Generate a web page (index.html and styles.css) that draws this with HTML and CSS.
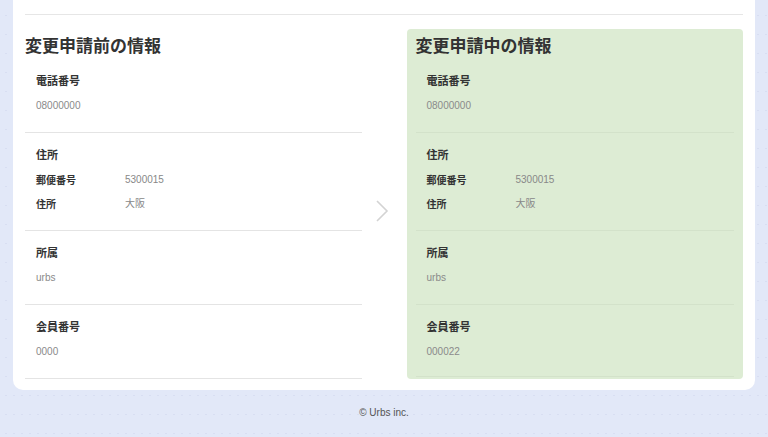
FILE: index.html
```html
<!DOCTYPE html>
<html lang="ja">
<head>
<meta charset="utf-8">
<title>変更申請</title>
<link rel="stylesheet" href="styles.css">
</head>
<body>
<main class="card">
  <div class="compare">
    <section class="panel">
      <h2 class="panel-title">変更申請前の情報</h2>
      <div class="item">
        <div class="label">電話番号</div>
        <div class="value">08000000</div>
      </div>
      <div class="item">
        <div class="label">住所</div>
        <div class="row"><span class="row-key">郵便番号</span><span class="row-val">5300015</span></div>
        <div class="row"><span class="row-key">住所</span><span class="row-val">大阪</span></div>
      </div>
      <div class="item">
        <div class="label">所属</div>
        <div class="value">urbs</div>
      </div>
      <div class="item">
        <div class="label">会員番号</div>
        <div class="value">0000</div>
      </div>
    </section>
    <div class="arrow">
      <svg width="14" height="24" viewBox="0 0 14 24"><polyline points="2,2 12,12 2,22" fill="none" stroke="#d3d3d3" stroke-width="1.6"/></svg>
    </div>
    <section class="panel panel-new">
      <h2 class="panel-title">変更申請中の情報</h2>
      <div class="item">
        <div class="label">電話番号</div>
        <div class="value">08000000</div>
      </div>
      <div class="item">
        <div class="label">住所</div>
        <div class="row"><span class="row-key">郵便番号</span><span class="row-val">5300015</span></div>
        <div class="row"><span class="row-key">住所</span><span class="row-val">大阪</span></div>
      </div>
      <div class="item">
        <div class="label">所属</div>
        <div class="value">urbs</div>
      </div>
      <div class="item">
        <div class="label">会員番号</div>
        <div class="value">000022</div>
      </div>
    </section>
  </div>
</main>
<footer class="footer">© Urbs inc.</footer>
</body>
</html>
```

FILE: styles.css
```css
html, body {
  margin: 0;
  padding: 0;
}
body {
  width: 768px;
  height: 437px;
  overflow: hidden;
  background-color: #e2e8f8;
  background-image: radial-gradient(circle, #d8def2 0.6px, transparent 1px);
  background-size: 8px 19px;
  background-position: 2px 6px;
  font-family: "Liberation Sans", "Noto Sans CJK JP", sans-serif;
  color: #333;
}
.card {
  margin: 0 13px;
  padding: 14px 12px 11px;
  background: #fff;
  border-radius: 0 0 10px 10px;
}
.compare {
  border-top: 1px solid #e6e6e6;
  padding-top: 14px;
  display: grid;
  grid-template-columns: 1fr 45px 1fr;
}
.panel {
  padding: 4px 0 0;
}
.panel-new {
  background: #ddecd4;
  border-radius: 4px;
  padding: 4px 9px 0;
}
.panel-title {
  margin: 0 0 2px;
  font-family: "Noto Sans CJK JP", sans-serif;
  font-size: 17px;
  line-height: 24px;
  font-weight: 700;
  color: #333;
}
.item {
  padding: 13px 11px 18px;
  border-bottom: 1px solid #e4e4e4;
}
.panel-new .item {
  border-bottom-color: #d3e2ca;
}
.panel-new .item:last-child {
  padding-bottom: 16px;
}
.label {
  font-family: "Noto Sans CJK JP", sans-serif;
  font-size: 11px;
  line-height: 16px;
  font-weight: 700;
  color: #333;
}
.value {
  margin-top: 10px;
  font-size: 10px;
  line-height: 16px;
  color: #8a8a8a;
}
.row {
  display: flex;
  margin-top: 8px;
  line-height: 16px;
}
.label + .row {
  margin-top: 10px;
}
.row-key {
  width: 89px;
  font-family: "Noto Sans CJK JP", sans-serif;
  font-size: 10px;
  font-weight: 700;
  color: #333;
}
.row-val {
  font-family: "Liberation Sans", "Noto Sans CJK JP", sans-serif;
  font-size: 10px;
  color: #888;
}
.arrow {
  display: flex;
  align-items: center;
  justify-content: center;
  padding-top: 14px;
  padding-right: 4px;
}
.arrow svg {
  display: block;
}
.footer {
  text-align: center;
  font-size: 10px;
  line-height: 14px;
  color: #555;
  padding-top: 16px;
}
```
